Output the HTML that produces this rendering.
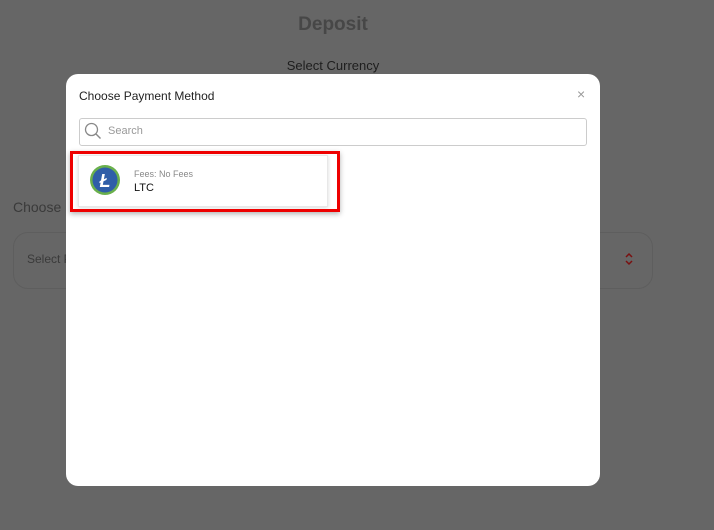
<!DOCTYPE html>
<html><head><style>
body{margin:0;width:714px;height:530px;background:#666;font-family:"Liberation Sans",sans-serif;position:relative;overflow:hidden}
.a{position:absolute;white-space:nowrap}
</style></head><body>
<div class="a" style="left:0;width:666px;top:14px;text-align:center;font-size:19px;font-weight:bold;color:#474747">Deposit</div>
<div class="a" style="left:0;width:666px;top:58px;text-align:center;font-size:13px;color:#1e1e1e">Select Currency</div>
<div class="a" style="left:13px;top:199px;font-size:14px;color:#3a3a3a">Choose P</div>
<div class="a" style="left:13px;top:232px;width:638px;height:55px;border:1px solid #5e5e5e;border-radius:15px"></div>
<div class="a" style="left:27px;top:252px;font-size:12px;color:#3a3a3a">Select P</div>
<svg class="a" style="left:624px;top:252px" width="10" height="14"><path d="M2 5 L5 2 L8 5 M2 9 L5 12 L8 9" stroke="#7a1010" stroke-width="1.5" fill="none"/></svg>
<div class="a" style="left:66px;top:74px;width:534px;height:412px;background:#fff;border-radius:12px"></div>
<div class="a" style="left:79px;top:89px;font-size:12px;color:#222">Choose Payment Method</div>
<div class="a" style="left:577px;top:86px;font-size:14px;color:#999">×</div>
<div class="a" style="left:79px;top:118px;width:506px;height:26px;border:1px solid #ccc;border-radius:3px"></div>
<svg class="a" style="left:84px;top:122px" width="18" height="18"><circle cx="7.5" cy="7.5" r="6" stroke="#888" stroke-width="1.3" fill="none"/><path d="M12 12 L16.5 16.5" stroke="#888" stroke-width="1.4"/></svg>
<div class="a" style="left:108px;top:125px;font-size:11px;color:#999">Search</div>
<div class="a" style="left:78px;top:155px;width:248px;height:50px;background:#fff;border:1px solid #e8e8e8;box-shadow:0 1px 4px rgba(0,0,0,.15)"></div>
<div class="a" style="left:70px;top:151px;width:264px;height:55px;border:3px solid #e00;box-shadow:0 2px 5px rgba(0,0,0,.3)"></div>
<svg class="a" style="left:89px;top:164px" width="32" height="32"><circle cx="16" cy="16" r="15" fill="#6ab04c"/><circle cx="16" cy="16" r="12.5" fill="#2f5ea8"/><text x="16" y="23" text-anchor="middle" font-family="Liberation Sans" font-style="italic" font-weight="bold" font-size="18" fill="#fff">Ł</text></svg>
<div class="a" style="left:134px;top:169px;font-size:9px;color:#888">Fees: No Fees</div>
<div class="a" style="left:134px;top:182px;font-size:11px;color:#111">LTC</div>
</body></html>
